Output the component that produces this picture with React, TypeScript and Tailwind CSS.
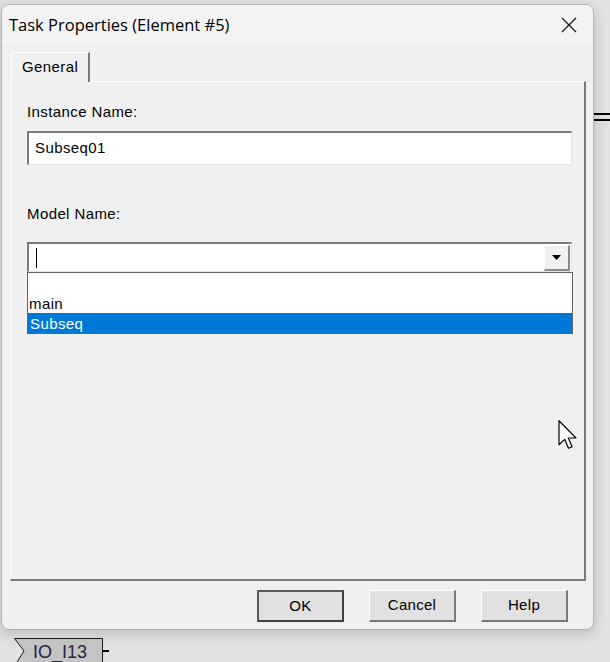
import React from "react";

const sunken =
  "border-t-2 border-l-2 border-b border-r border-t-[#7a7a7a] border-l-[#7a7a7a] border-b-[#e3e3e3] border-r-[#e3e3e3]";

const Btn = ({ label, primary }: { label: string; primary?: boolean }) => (
  <button
    className={
      "w-[87px] h-[32px] bg-[#e1e1e1] text-[15px] tracking-[0.3px] text-black flex items-center justify-center " +
      (primary
        ? "border-2 border-t-[#5a5a5a] border-l-[#5a5a5a] border-b-[#404040] border-r-[#404040]"
        : "border-t border-l border-b-2 border-r-2 border-t-white border-l-white border-b-[#7a7a7a] border-r-[#7a7a7a]")
    }
  >
    {label}
  </button>
);

const App = () => {
  return (
    <div className="w-[610px] h-[662px] bg-[#e2e2e2] relative overflow-hidden font-['Liberation_Sans',Arial,sans-serif]">
      <div className="flex items-start pt-[4px] pl-px">
        {/* dialog */}
        <div className="w-[593px] h-[626px] bg-[#f0f0f0] border border-[#b4b4b4] rounded-lg flex flex-col shadow-[0_4px_14px_rgba(0,0,0,0.18)] overflow-hidden">
          <div className="h-[40px] bg-[#f3f3f3] flex items-center justify-between pl-[7px] pr-[16px]">
            <span className="text-[16.5px] text-black font-['Open_Sans',sans-serif]">
              Task Properties (Element #5)
            </span>
            <svg width="16" height="16" viewBox="0 0 16 16" className="block">
              <path d="M1 1 L15 15 M15 1 L1 15" stroke="#1a1a1a" strokeWidth="1.3" fill="none" />
            </svg>
          </div>

          <div className="flex-1 flex flex-col pl-[8px] pr-[8px] pt-[7px]">
            {/* tab row */}
            <div className="flex">
              <div className="ml-px h-[30px] w-[79px] bg-[#f0f0f0] border-t border-l border-t-white border-l-white border-r-2 border-r-[#7a7a7a] rounded-tl-[2px] flex items-center pl-[10px] text-[15px] tracking-[0.4px] -mb-px relative z-10">
                General
              </div>
            </div>
            {/* panel */}
            <div className="h-[500px] w-[576px] border-t border-l border-t-white border-l-white border-r-2 border-b-2 border-r-[#7a7a7a] border-b-[#7a7a7a] pl-[16px] pt-[20px] flex flex-col text-[15px] tracking-[0.4px]">
              <div className="text-black leading-[20px]">Instance Name:</div>
              <div className={"mt-[9px] h-[34px] w-[545px] bg-white flex items-center pl-[6px] " + sunken}>
                Subseq01
              </div>
              <div className="mt-[39px] text-black leading-[20px]">Model Name:</div>
              <div className={"mt-[18px] h-[30px] w-[545px] bg-white flex items-center justify-between pl-[7px] pr-px " + sunken}>
                <span className="w-px h-[20px] bg-black" />
                <div className="w-[26px] h-[26px] bg-[#f0f0f0] border-t border-l border-b-2 border-r-2 border-t-white border-l-white border-b-[#8a8a8a] border-r-[#8a8a8a] flex items-center justify-center">
                  <svg width="9" height="5" viewBox="0 0 9 5" className="block">
                    <path d="M0 0 H9 L4.5 5 Z" fill="#000" />
                  </svg>
                </div>
              </div>
              <div className="w-[546px] border border-[#646464] bg-white">
                <div className="h-[20px]" />
                <div className="h-[20px] flex items-end pl-px leading-[18px]">main</div>
                <div className="h-[20px] flex items-end pl-[2px] leading-[18px] bg-[#0078d7] text-white">Subseq</div>
              </div>
            </div>
            {/* buttons */}
            <div className="flex justify-end gap-[25px] pr-[17px] pt-[9px]">
              <Btn label="OK" primary />
              <Btn label="Cancel" />
              <Btn label="Help" />
            </div>
          </div>
        </div>

        {/* canvas behind, right side */}
        <div className="flex-1 pt-[109px] flex flex-col gap-[4px]">
          <div className="h-[2px] bg-black" />
          <div className="h-[2px] bg-black" />
        </div>
      </div>

      {/* IO tag under the dialog */}
      <div className="flex items-center mt-[8px] ml-[14px]">
        <div className="relative w-[89px] h-[28px] flex items-center pl-[19px]">
          <svg width="89" height="28" viewBox="0 0 89 28" className="absolute inset-0">
            <path d="M0.5 0.5 H88.5 V28 H0.5 L10 13 Z" fill="#c4c4c4" stroke="#1a1a1a" strokeWidth="1" />
          </svg>
          <span className="relative text-[18px] text-[#23234a] leading-none">IO_I13</span>
        </div>
        <div className="w-[6px] h-[2px] bg-black -mt-[2px]" />
      </div>

      {/* mouse pointer */}
      <svg width="20" height="30" viewBox="0 0 13 20" className="absolute left-[558px] top-[420px]">
        <path d="M0.5 0.5 V16.5 L4.3 12.9 L6.8 18.8 L9.2 17.8 L6.7 12 H11.8 Z" fill="#fff" stroke="#000" strokeWidth="0.8" strokeLinejoin="round" />
      </svg>
    </div>
  );
};

export default App;
